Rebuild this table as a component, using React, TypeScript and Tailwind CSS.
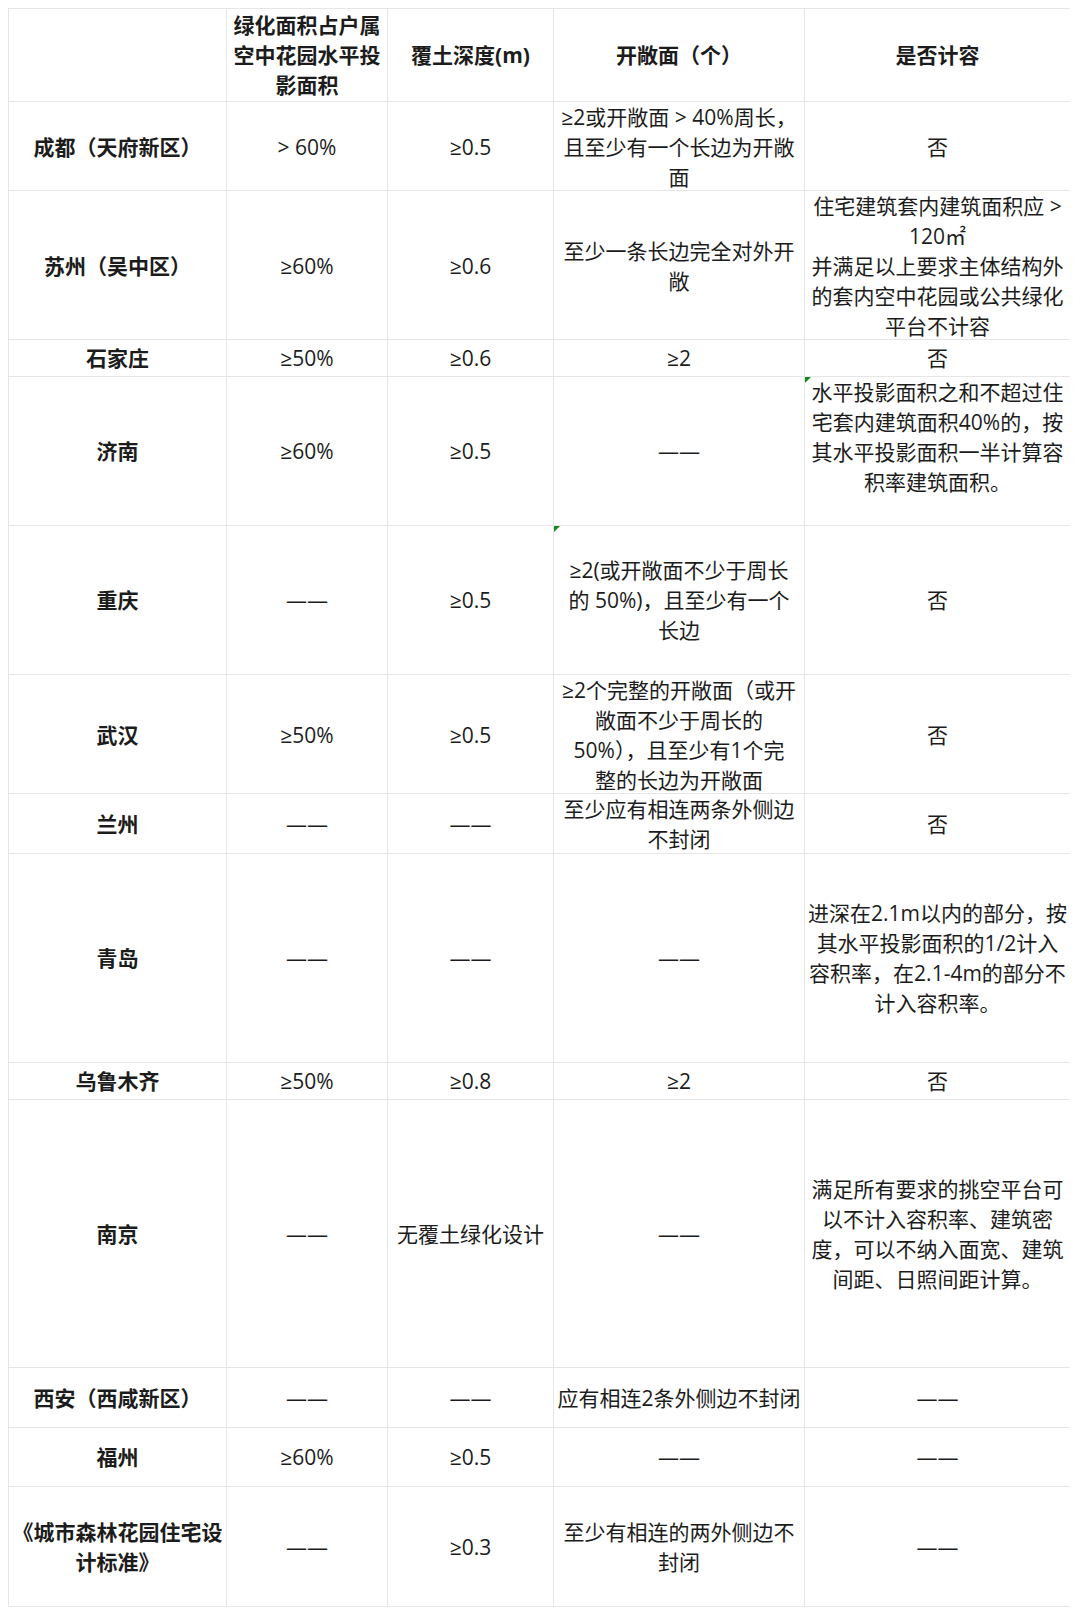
const D = "——";

type Row = {
  h: string;
  cells: (string | string[])[];
  top?: number[];
  marks?: number[];
};

// cell lines are broken by hand so the wrapping matches the sheet
const rows: Row[] = [
  {
    h: "h-[89px]",
    cells: [["成都（天府新区）"], ["> 60%"], ["≥0.5"], ["≥2或开敞面 > 40%周长，", "且至少有一个长边为开敞", "面"], ["否"]],
  },
  {
    h: "h-[149px]",
    cells: [
      ["苏州（吴中区）"],
      ["≥60%"],
      ["≥0.6"],
      ["至少一条长边完全对外开", "敞"],
      ["住宅建筑套内建筑面积应 >", "120㎡", "并满足以上要求主体结构外", "的套内空中花园或公共绿化", "平台不计容"],
    ],
  },
  { h: "h-[37px]", cells: [["石家庄"], ["≥50%"], ["≥0.6"], ["≥2"], ["否"]] },
  {
    h: "h-[149px]",
    top: [4],
    marks: [4],
    cells: [
      ["济南"],
      ["≥60%"],
      ["≥0.5"],
      [D],
      ["水平投影面积之和不超过住", "宅套内建筑面积40%的，按", "其水平投影面积一半计算容", "积率建筑面积。"],
    ],
  },
  {
    h: "h-[149px]",
    marks: [3],
    cells: [["重庆"], [D], ["≥0.5"], ["≥2(或开敞面不少于周长", "的 50%)，且至少有一个", "长边"], ["否"]],
  },
  {
    h: "h-[119px]",
    cells: [
      ["武汉"],
      ["≥50%"],
      ["≥0.5"],
      ["≥2个完整的开敞面（或开", "敞面不少于周长的", "50%），且至少有1个完", "整的长边为开敞面"],
      ["否"],
    ],
  },
  { h: "h-[60px]", cells: [["兰州"], [D], [D], ["至少应有相连两条外侧边", "不封闭"], ["否"]] },
  {
    h: "h-[209px]",
    cells: [
      ["青岛"],
      [D],
      [D],
      [D],
      ["进深在2.1m以内的部分，按", "其水平投影面积的1/2计入", "容积率，在2.1-4m的部分不", "计入容积率。"],
    ],
  },
  { h: "h-[37px]", cells: [["乌鲁木齐"], ["≥50%"], ["≥0.8"], ["≥2"], ["否"]] },
  {
    h: "h-[268px]",
    cells: [
      ["南京"],
      [D],
      ["无覆土绿化设计"],
      [D],
      ["满足所有要求的挑空平台可", "以不计入容积率、建筑密", "度，可以不纳入面宽、建筑", "间距、日照间距计算。"],
    ],
  },
  { h: "h-[60px]", cells: [["西安（西咸新区）"], [D], [D], ["应有相连2条外侧边不封闭"], [D]] },
  { h: "h-[59px]", cells: [["福州"], ["≥60%"], ["≥0.5"], [D], [D]] },
  {
    h: "h-[120px]",
    cells: [["《城市森林花园住宅设", "计标准》"], [D], ["≥0.3"], ["至少有相连的两外侧边不", "封闭"], [D]],
  },
];

const head = [[""], ["绿化面积占户属", "空中花园水平投", "影面积"], ["覆土深度(m)"], ["开敞面（个）"], ["是否计容"]];

const cols = "grid grid-cols-[218px_161px_166px_251px_266px]";

const Lines = ({ lines }: { lines: string | string[] }) => {
  const arr = Array.isArray(lines) ? lines : [lines];
  return (
    <div className="flex flex-col items-center">
      {arr.map((l, i) => (
        <div key={i} className="whitespace-nowrap">
          {l}
        </div>
      ))}
    </div>
  );
};

const App = () => {
  return (
    <div className="min-h-[1614px] w-[1080px] bg-white pt-[8px] pl-[8px] text-[21px] leading-[30px] text-[#1c1c1c] [font-family:'Open_Sans','Noto_Sans_CJK_SC',sans-serif]">
      <div className="w-[1062px] border-b border-[#e6e6e6]">
        <div className={`${cols} h-[93px]`}>
          {head.map((c, i) => (
            <div key={i} className="flex items-center justify-center border-t border-l border-[#e6e6e6] font-bold">
              <Lines lines={c} />
            </div>
          ))}
        </div>
        {rows.map((r, ri) => (
          <div key={ri} className={`${cols} ${r.h}`}>
            {r.cells.map((c, ci) => (
              <div
                key={ci}
                className={`relative flex justify-center border-t border-l border-[#e6e6e6] ${
                  r.top?.includes(ci) ? "items-start" : "items-center"
                } ${ci === 0 ? "font-bold" : "font-normal"}`}
              >
                {r.marks?.includes(ci) && (
                  <span className="absolute left-0 top-0 h-0 w-0 border-t-[6px] border-r-[6px] border-t-[#138a1f] border-r-transparent" />
                )}
                <Lines lines={c} />
              </div>
            ))}
          </div>
        ))}
      </div>
    </div>
  );
};

export default App;
